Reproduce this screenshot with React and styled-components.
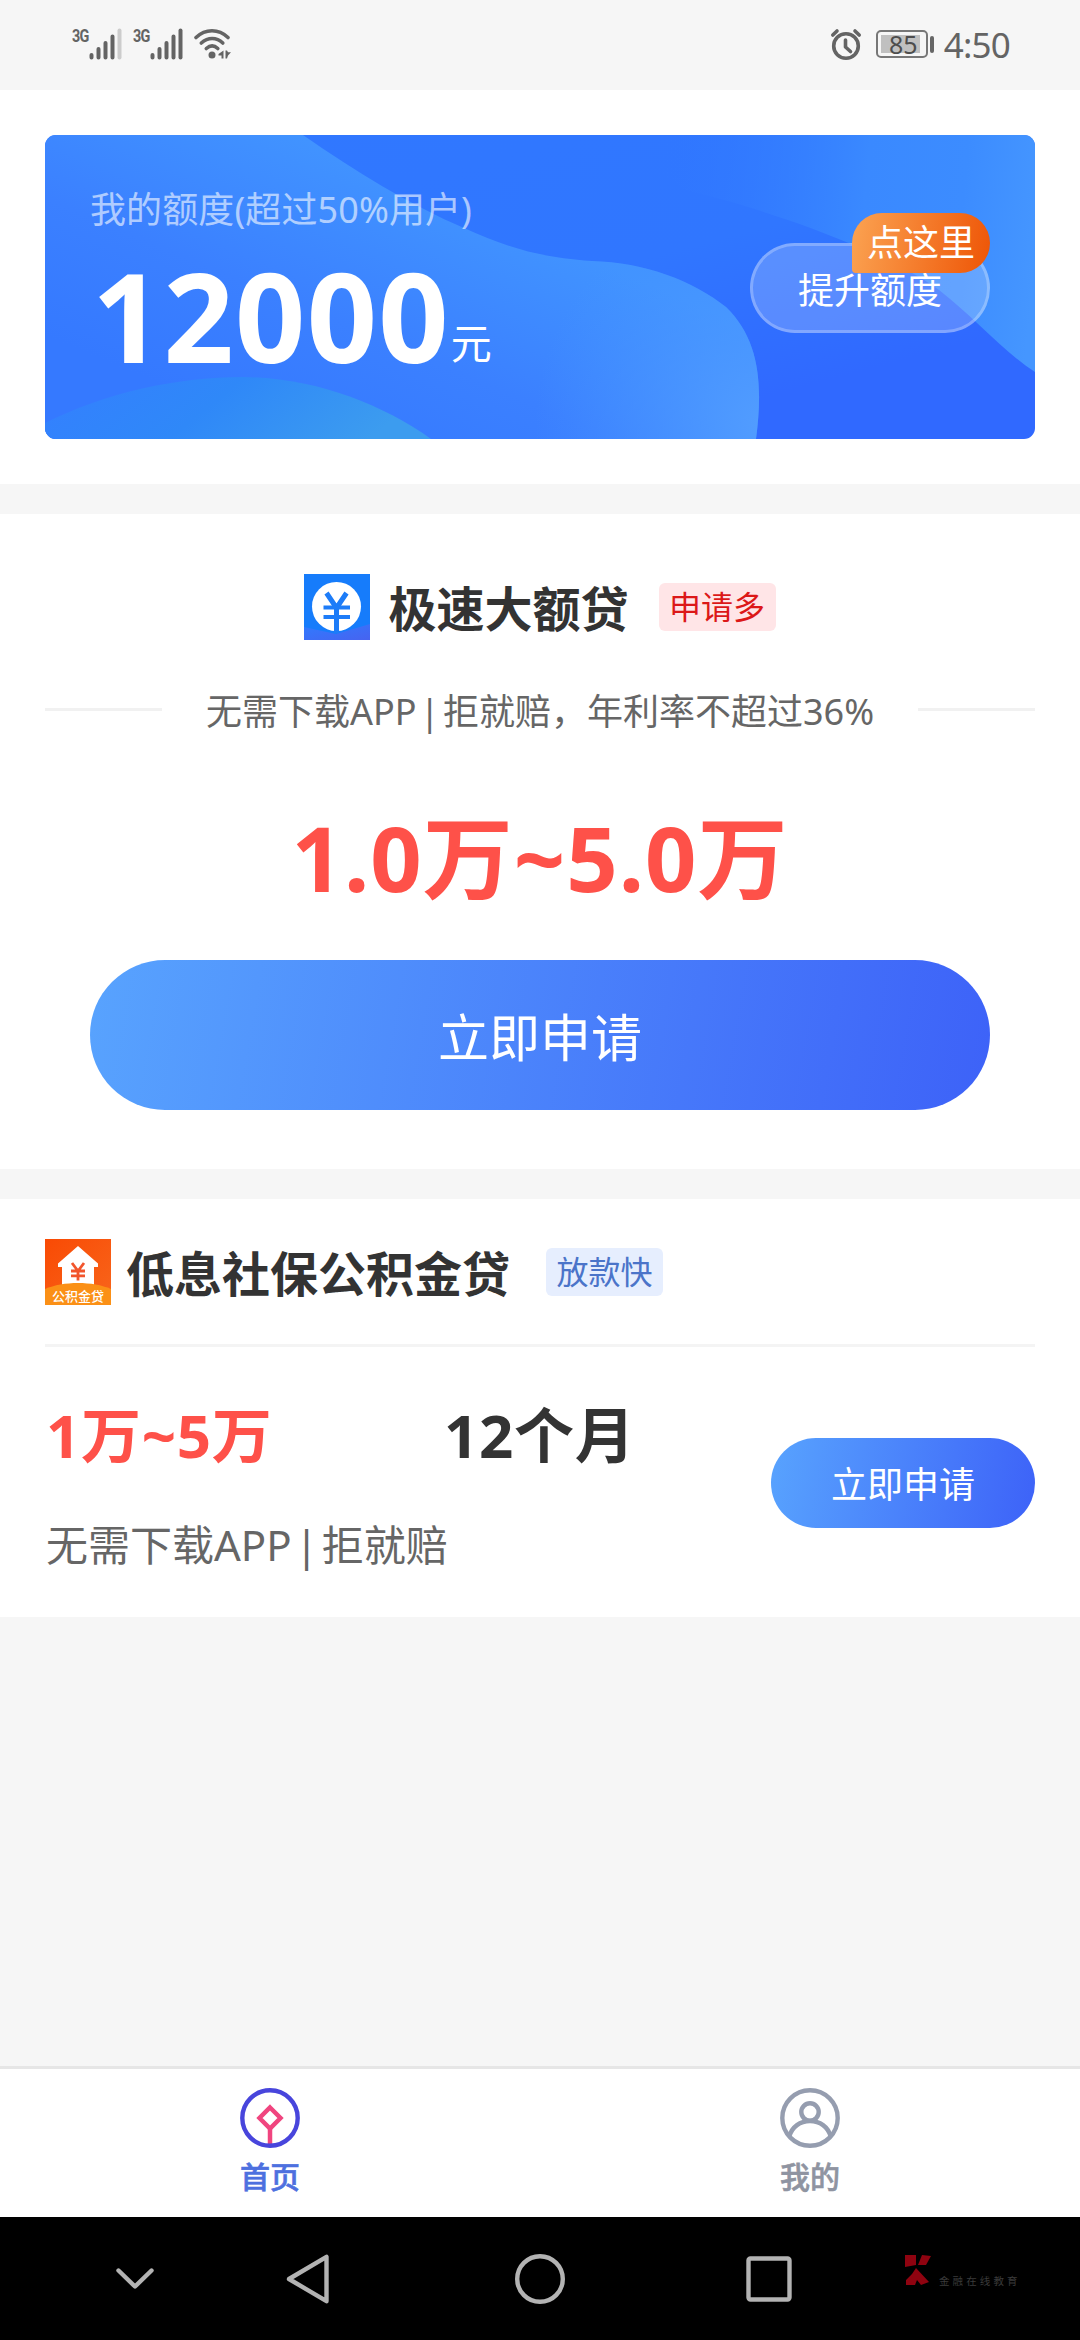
import React from "react";
import styled, { createGlobalStyle } from "styled-components";

const GlobalStyle = createGlobalStyle`
  * {
    box-sizing: border-box;
    margin: 0;
    padding: 0;
  }

  body {
    background-color: #f6f6f6;
    font-family: "Noto Sans", "Noto Sans CJK SC", sans-serif;
    color: #333333;
  }

  svg {
    display: block;
    flex-shrink: 0;
  }
`;

const Pantalla = styled.div`
  width: 1080px;
  height: 2340px;
  display: flex;
  flex-direction: column;
  overflow: hidden;
  background-color: #f6f6f6;
`;

/*------ Status bar ------*/

const StatusBar = styled.header`
  height: 90px;
  flex-shrink: 0;
  display: flex;
  justify-content: space-between;
  padding: 0 70px 0 72px;
  color: #646464;
`;

const StatusSide = styled.div`
  display: flex;
  align-items: center;
  padding-bottom: 2px;
`;

const Network = styled.span`
  height: 32px;
  width: 17px;
  margin-right: 0;
  font-family: "Roboto", sans-serif;
  font-size: 18px;
  line-height: 15px;
  font-weight: 700;
  letter-spacing: -1px;
  transform: scaleX(0.8);
  transform-origin: left top;
`;

const Signal = styled.svg`
  margin-right: 11px;
`;

const BatteryBox = styled.div`
  width: 52px;
  height: 28px;
  margin-left: 14px;
  padding: 3px;
  border: 2px solid #777777;
  border-radius: 5px;
`;

const BatteryLevel = styled.div`
  width: 39px;
  height: 18px;
  background-color: #c0c0c0;
  font-size: 25px;
  line-height: 18px;
  text-align: center;
  color: #4d4d4d;
  padding-left: 6px;
`;

const BatteryCap = styled.div`
  width: 4px;
  height: 17px;
  margin-left: 2px;
  border-radius: 2px;
  background-color: #666666;
`;

const Clock = styled.span`
  margin-left: 10px;
  padding-top: 2px;
  font-size: 35px;
  line-height: 40px;
  letter-spacing: -0.8px;
`;

/*------ Sections ------*/

const Section = styled.section`
  height: ${({ $h }) => $h}px;
  flex-shrink: 0;
  margin-bottom: 30px;
  padding: ${({ $pad }) => $pad};
  background-color: #ffffff;
`;

const Banner = styled.div`
  position: relative;
  height: 304px;
  display: flex;
  justify-content: space-between;
  padding: 48px 45px 0;
  border-radius: 11px;
  overflow: hidden;
  background: linear-gradient(165deg, #3078ff 0%, #3076ff 50%, #3069ff 80%);
`;

const Waves = styled.svg`
  position: absolute;
  left: 0;
  top: 0;
`;

const Quota = styled.div`
  position: relative;
  color: #ffffff;
`;

const QuotaLabel = styled.p`
  font-size: 36px;
  line-height: 54px;
  letter-spacing: 0.1px;
  color: rgba(255, 255, 255, 0.6);
`;

const QuotaValue = styled.div`
  display: flex;
  align-items: baseline;
  margin-top: 9px;
  padding-left: 2px;
  line-height: 140px;
`;

const QuotaNumber = styled.span`
  font-size: 123px;
  font-weight: 700;
  letter-spacing: 1.2px;
`;

const QuotaUnit = styled.span`
  margin-left: 1px;
  padding-bottom: 4px;
  font-size: 41px;
  transform: translateY(-4px);
`;

const RaiseButton = styled.button`
  position: relative;
  width: 240px;
  height: 90px;
  margin-top: 60px;
  border: 3px solid rgba(255, 255, 255, 0.4);
  border-radius: 45px;
  background-color: rgba(255, 255, 255, 0.2);
  background-clip: padding-box;
  font-family: inherit;
  font-size: 36px;
  color: #ffffff;
`;

const RaiseTip = styled.span`
  position: absolute;
  right: -3px;
  top: -33px;
  width: 138px;
  height: 60px;
  border-radius: 30px 30px 30px 4px;
  background: linear-gradient(100deg, #fba352, #ee5506);
  line-height: 60px;
  text-align: center;
  color: #ffffff;
`;

const Header = styled.div`
  height: 66px;
  display: flex;
  align-items: center;
  justify-content: ${({ $center }) => ($center ? "center" : "flex-start")};
`;

const Title = styled.h2`
  margin-left: ${({ $gap }) => $gap}px;
  padding-top: 3px;
  font-size: 48px;
  line-height: 66px;
  font-weight: 700;
  color: #333333;
`;

const Tag = styled.span`
  width: 117px;
  height: 48px;
  margin-left: ${({ $gap }) => $gap}px;
  border-radius: 6px;
  background-color: ${({ $bg }) => $bg};
  font-size: 32px;
  line-height: 47px;
  text-align: center;
  color: ${({ $color }) => $color};
`;

const Desc = styled.div`
  display: flex;
  align-items: center;
  justify-content: space-between;
  height: 54px;
  margin-top: 45px;
`;

const DescLine = styled.span`
  width: 117px;
  height: 3px;
  margin-bottom: 5px;
  background-color: #f1f1f1;
`;

const DescText = styled.p`
  font-size: 36px;
  line-height: 54px;
  word-spacing: -6px;
  color: #666666;
`;

const Range = styled.p`
  margin-top: 53px;
  font-size: 90px;
  line-height: 130px;
  font-weight: 700;
  letter-spacing: 1px;
  text-align: center;
  color: #fe5149;
`;

const ApplyButton = styled.button`
  display: block;
  flex-shrink: 0;
  width: ${({ $big }) => ($big ? 900 : 264)}px;
  height: ${({ $big }) => ($big ? 150 : 90)}px;
  margin: ${({ $big }) => ($big ? "38px auto 0" : "0")};
  padding-bottom: 1px;
  border: none;
  border-radius: 75px;
  background: linear-gradient(100deg, #58a3fe, #3d62f8);
  font-family: inherit;
  font-size: ${({ $big }) => ($big ? 51 : 36)}px;
  color: #ffffff;
`;

const Divider = styled.hr`
  height: 3px;
  margin-top: 39px;
  border: none;
  background-color: #f4f4f4;
`;

const LoanRow = styled.div`
  display: flex;
  justify-content: space-between;
  align-items: center;
  margin-top: 43px;
`;

const LoanFigures = styled.div`
  display: grid;
  grid-template-columns: 398px auto;
`;

const Figure = styled.p`
  font-size: 60px;
  line-height: 90px;
  font-weight: 700;
  letter-spacing: 0.7px;
  padding-left: 1px;
  color: ${({ $red }) => ($red ? "#fe5149" : "#333333")};
`;

const LoanNote = styled.p`
  grid-column: 1 / 3;
  margin-top: 35px;
  font-size: 42px;
  line-height: 60px;
  word-spacing: -7.5px;
  padding-left: 1px;
  color: #666666;
`;

/*------ Tab bar ------*/

const TabBar = styled.nav`
  height: 151px;
  flex-shrink: 0;
  margin-top: auto;
  display: grid;
  grid-template-columns: 1fr 1fr;
  border-top: 3px solid #e6e6e6;
  background-color: #ffffff;
`;

const Tab = styled.a`
  display: flex;
  flex-direction: column;
  align-items: center;
  padding-top: 19px;
  color: ${({ $active }) => ($active ? "#4d70df" : "#8f94a1")};

  span {
    margin-top: 7px;
    font-size: 30px;
    line-height: 40px;
    font-weight: 500;
    font-family: "Noto Sans CJK SC", sans-serif;
    -webkit-text-stroke: 0.6px currentColor;
  }
`;

/*------ Android buttons ------*/

const SystemBar = styled.footer`
  height: 123px;
  flex-shrink: 0;
  display: flex;
  align-items: center;
  padding-left: 116px;
  background-color: #000000;
`;

const SystemIcon = styled.svg`
  margin-right: ${({ $gap }) => $gap}px;
  fill: none;
  stroke: #b3b3b3;
  stroke-width: 4.4;
  stroke-linejoin: round;
  stroke-linecap: round;
`;

const Brand = styled.div`
  display: flex;
  align-items: flex-end;
  padding-bottom: 17px;
`;

const BrandName = styled.span`
  margin-bottom: -2px;
  margin-left: 7px;
  font-size: 10.5px;
  line-height: 14px;
  letter-spacing: 3.1px;
  color: #3a3a3a;
`;

const SignalIcon = ({ weak }) => (
  <Signal width="33" height="32" viewBox="0 0 33 32">
    <g stroke="#646464" strokeWidth="4" strokeLinecap="round">
      <path d="M2.5 27v2.5M9.5 21v8.5M16.5 15v14.5M23.5 8.500v21" />
      <path d="M30.500 2.500v27" stroke={weak ? "#cccccc" : "#646464"} />
    </g>
  </Signal>
);

const WifiIcon = () => (
  <svg width="38" height="32" viewBox="0 0 38 32" fill="none">
    <g stroke="#646464" strokeWidth="3.6" strokeLinecap="round">
      <path d="M2 9.500C11.500 0.500 24.500 0.500 34 9.500" />
      <path d="M7.300 15C14 9 22.500 9 28.800 15" />
      <path d="M12.300 20.500C16 17.300 20.300 17.300 23.800 20.500" />
    </g>
    <circle cx="18" cy="27" r="3.500" fill="#646464" />
    <path d="M29.500 22.500v8h-2v-3h-3v-1.500z" fill="#646464" />
    <path d="M31.500 22.500h1.500l1 1.800h3l-3 3.200-1 3h-1.500z" fill="#646464" />
  </svg>
);

const AlarmIcon = () => (
  <svg width="32" height="33" viewBox="0 0 32 33" fill="none">
    <g stroke="#646464" strokeLinecap="round">
      <circle cx="16" cy="18" r="12.300" strokeWidth="3.600" />
      <path d="M2.800 7L7 3M29.200 7L25 3" strokeWidth="3.600" />
      <path d="M15.500 12v7l5 4.500" strokeWidth="3.600" strokeLinejoin="round" />
    </g>
  </svg>
);

const BannerWaves = () => (
  <Waves width="990" height="304" viewBox="0 0 990 304">
    <defs>
      <linearGradient id="waveMain" gradientUnits="userSpaceOnUse" x1="440" y1="80" x2="330" y2="340">
        <stop offset="0" stopColor="#4193ff" />
        <stop offset="0.55" stopColor="#3b80ff" />
        <stop offset="1" stopColor="#3579ff" />
      </linearGradient>
      <radialGradient id="waveEdge" gradientUnits="userSpaceOnUse" cx="720" cy="290" r="230">
        <stop offset="0" stopColor="#529dff" />
        <stop offset="1" stopColor="#4896ff" stopOpacity="0" />
      </radialGradient>
      <linearGradient id="waveLow" x1="0" y1="0" x2="1" y2="0.2">
        <stop offset="0" stopColor="#347fff" />
        <stop offset="0.5" stopColor="#2f88f8" />
        <stop offset="1" stopColor="#3c9cef" />
      </linearGradient>
      <linearGradient id="waveRight" gradientUnits="userSpaceOnUse" x1="600" y1="90" x2="990" y2="130">
        <stop offset="0" stopColor="#3076ff" stopOpacity="0" />
        <stop offset="0.55" stopColor="#3a89ff" />
        <stop offset="0.8" stopColor="#3c8cff" />
        <stop offset="1" stopColor="#4596ff" />
      </linearGradient>
    </defs>
    <path
      d="M0 0H258C310 36 365 70 419 93C460 111 490 122 547 126C600 127 648 146 681 172C715 205 718 250 711 304H0z"
      fill="url(#waveMain)"
    />
    <path
      d="M0 0H258C310 36 365 70 419 93C460 111 490 122 547 126C600 127 648 146 681 172C715 205 718 250 711 304H0z"
      fill="url(#waveEdge)"
    />
    <path d="M0 288C60 258 130 242 198 242C270 243 335 268 386 304H0z" fill="url(#waveLow)" />
    <path
      d="M560 0H990V237C960 218 930 183 894 155C860 130 800 105 743 85C702 71 670 62 640 55z"
      fill="url(#waveRight)"
    />
  </Waves>
);

const YuanLogo = () => (
  <svg width="66" height="66" viewBox="0 0 66 66">
    <defs>
      <linearGradient id="yuanFold" x1="0" y1="0" x2="1" y2="1">
        <stop offset="0" stopColor="#2f7bff" />
        <stop offset="1" stopColor="#4763f0" />
      </linearGradient>
    </defs>
    <rect width="66" height="66" fill="#167cfb" />
    <path d="M0 53L32 60L66 50V66H0z" fill="url(#yuanFold)" />
    <circle cx="32.500" cy="32.500" r="24.500" fill="#ffffff" />
    <g stroke="#1d7cf8" strokeWidth="5" fill="none">
      <path d="M22.500 19L32.500 34L42.500 19M32.500 33V59" />
      <path d="M19.500 33.500H46M19.500 43H46" strokeWidth="4" />
    </g>
  </svg>
);

const FundLogo = () => (
  <svg width="66" height="66" viewBox="0 0 66 66">
    <defs>
      <linearGradient id="fundSky" x1="0" y1="0" x2="1" y2="1">
        <stop offset="0" stopColor="#f94a04" />
        <stop offset="1" stopColor="#f8661c" />
      </linearGradient>
    </defs>
    <rect width="66" height="66" fill="url(#fundSky)" />
    <path d="M33 7L53 24.500V28H49V50H17V28H13V24.500z" fill="#ffffff" />
    <path d="M0 50C18 42 48 42 66 50V66H0z" fill="#fb9016" />
    <g stroke="#f2552c" strokeWidth="2.800" fill="none">
      <path d="M27 24L33 32L39 24M33 31V41.500M26 32H40M26 36.800H40" />
    </g>
    <text
      x="33"
      y="61.500"
      fontSize="13"
      fontWeight="500"
      textAnchor="middle"
      fill="#ffffff"
    >
      公积金贷
    </text>
  </svg>
);

const HomeIcon = () => (
  <svg width="60" height="60" viewBox="0 0 60 60" fill="none">
    <path d="M30 40V56" stroke="#f0457f" strokeWidth="4.500" />
    <path d="M30 19.500L40.500 30L30 40.500L19.500 30z" stroke="#f0457f" strokeWidth="4.500" />
    <circle cx="30" cy="30" r="27.700" stroke="#4845dc" strokeWidth="4.400" />
  </svg>
);

const UserIcon = () => (
  <svg width="60" height="60" viewBox="0 0 60 60" fill="none" stroke="#959daf" strokeWidth="4.400">
    <circle cx="30" cy="30" r="27.700" />
    <circle cx="30" cy="24" r="8.700" />
    <path d="M9.500 48C12 39 20 33 30 33C40 33 48 39 50.500 48" />
  </svg>
);

const App = () => {
  return (
    <Pantalla>
      <GlobalStyle />
      <StatusBar>
        <StatusSide>
          <Network>3G</Network>
          <SignalIcon weak />
          <Network>3G</Network>
          <SignalIcon />
          <WifiIcon />
        </StatusSide>
        <StatusSide>
          <AlarmIcon />
          <BatteryBox>
            <BatteryLevel>85</BatteryLevel>
          </BatteryBox>
          <BatteryCap />
          <Clock>4:50</Clock>
        </StatusSide>
      </StatusBar>

      <Section $h={394} $pad="45px 45px 0">
        <Banner>
          <BannerWaves />
          <Quota>
            <QuotaLabel>我的额度(超过50%用户)</QuotaLabel>
            <QuotaValue>
              <QuotaNumber>12000</QuotaNumber>
              <QuotaUnit>元</QuotaUnit>
            </QuotaValue>
          </Quota>
          <RaiseButton>
            提升额度
            <RaiseTip>点这里</RaiseTip>
          </RaiseButton>
        </Banner>
      </Section>

      <Section $h={655} $pad="60px 45px 0">
        <Header $center>
          <YuanLogo />
          <Title $gap={18}>极速大额贷</Title>
          <Tag $gap={30} $bg="#ffe5e7" $color="#dc1818">
            申请多
          </Tag>
        </Header>
        <Desc>
          <DescLine />
          <DescText>无需下载APP | 拒就赔，年利率不超过36%</DescText>
          <DescLine />
        </Desc>
        <Range>1.0万~5.0万</Range>
        <ApplyButton $big>立即申请</ApplyButton>
      </Section>

      <Section $h={418} $pad="40px 45px 0">
        <Header>
          <FundLogo />
          <Title $gap={15}>低息社保公积金贷</Title>
          <Tag $gap={36} $bg="#e6eefe" $color="#4b74c9">
            放款快
          </Tag>
        </Header>
        <Divider />
        <LoanRow>
          <LoanFigures>
            <Figure $red>1万~5万</Figure>
            <Figure>12个月</Figure>
            <LoanNote>无需下载APP | 拒就赔</LoanNote>
          </LoanFigures>
          <ApplyButton>立即申请</ApplyButton>
        </LoanRow>
      </Section>

      <TabBar>
        <Tab $active>
          <HomeIcon />
          <span>首页</span>
        </Tab>
        <Tab>
          <UserIcon />
          <span>我的</span>
        </Tab>
      </TabBar>

      <SystemBar>
        <SystemIcon $gap={132} width="38" height="22" viewBox="0 0 38 22">
          <path d="M2.500 2.500L19 18.500L35.500 2.500" />
        </SystemIcon>
        <SystemIcon $gap={185} width="44" height="50" viewBox="0 0 44 50">
          <path d="M40.500 2.800V47.200L3 25z" />
        </SystemIcon>
        <SystemIcon $gap={181} width="50" height="50" viewBox="0 0 50 50">
          <circle cx="25" cy="25" r="22.800" />
        </SystemIcon>
        <SystemIcon $gap={112} width="46" height="46" viewBox="0 0 46 46">
          <rect x="2.500" y="2.500" width="41" height="41" rx="2" />
        </SystemIcon>
        <Brand>
          <svg width="28" height="32" viewBox="0 0 28 32" fill="#8f0310">
            <path d="M1 1H12V11L1 13z" />
            <path d="M18 1L27 2L22 11L14 11z" />
            <path d="M8 20L12 14L25 28L17 31L13 26L11 31H2V26z" />
          </svg>
          <BrandName>金融在线教育</BrandName>
        </Brand>
      </SystemBar>
    </Pantalla>
  );
};

export default App;
